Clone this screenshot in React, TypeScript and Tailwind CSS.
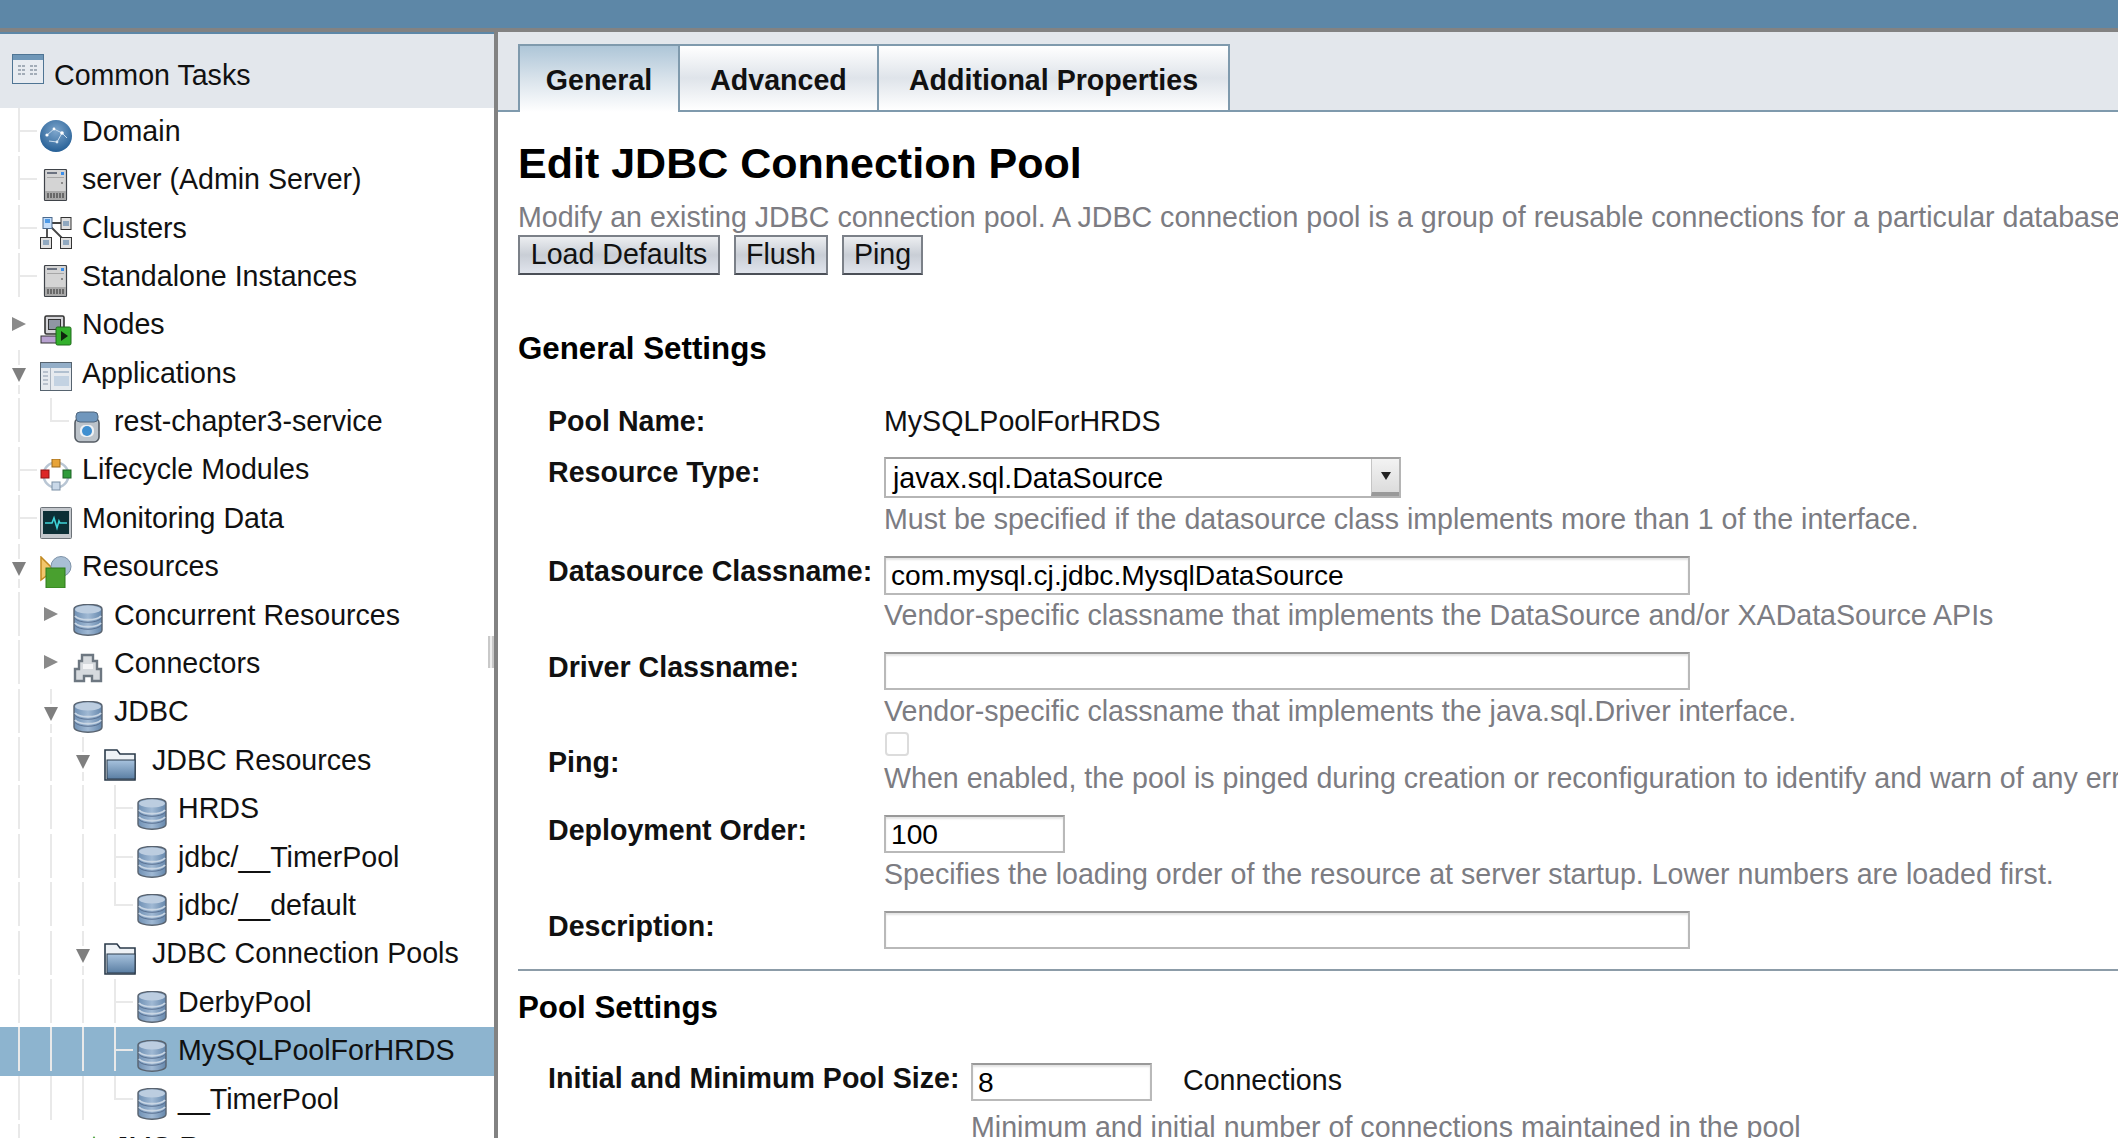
import type { ReactNode } from "react";

type Cell = "I" | "T" | "L" | "R" | "D" | "";

function Guide({ kind }: { kind: Cell }) {
	return (
		<div className="relative w-8 h-full shrink-0">
			{(kind === "I" || kind === "T" || kind === "D") && (
				<div className="absolute left-[15px] top-0 w-[2px] h-[44px] bg-[#e9e9e9]" />
			)}
			{kind === "L" && (
				<div className="absolute left-[15px] top-0 w-[2px] h-[23px] bg-[#e9e9e9]" />
			)}
			{(kind === "T" || kind === "L") && (
				<div className="absolute left-[15px] top-[22px] w-[19px] h-[2px] bg-[#e9e9e9]" />
			)}
			{kind === "R" && (
				<svg className="absolute left-[9px] top-[15px]" width="15" height="15" viewBox="0 0 15 15">
					<path d="M0 0 L14 7 L0 14 Z" fill="#8a8a8a" />
				</svg>
			)}
			{kind === "D" && (
				<div className="absolute left-[6px] top-[15px] w-5 h-[20px] bg-white">
					<svg className="absolute left-[3px] top-[3px]" width="15" height="15" viewBox="0 0 15 15">
						<path d="M0 0 L14 0 L7 14 Z" fill="#7f7f7f" />
					</svg>
				</div>
			)}
		</div>
	);
}

function DbIcon() {
	return (
		<svg width="30" height="32" viewBox="0 0 30 32">
			<defs>
				<linearGradient id="dbg" x1="0" x2="1" y1="0" y2="0">
					<stop offset="0" stopColor="#6f90b4" />
					<stop offset="0.5" stopColor="#a0b9d4" />
					<stop offset="1" stopColor="#6587ac" />
				</linearGradient>
			</defs>
			<path d="M1 5 C1 -1 29 -1 29 5 L29 26 C29 33 1 33 1 26 Z" fill="url(#dbg)" stroke="#59636f" strokeWidth="1.4" />
			<ellipse cx="15" cy="5.5" rx="13" ry="4" fill="#bccde0" />
			<path d="M2 12 C6 17 24 17 28 12 M2 19 C6 24 24 24 28 19" fill="none" stroke="#c9d6e4" strokeWidth="2" />
			<path d="M2 14.5 C6 19.5 24 19.5 28 14.5 M2 21.5 C6 26.5 24 26.5 28 21.5" fill="none" stroke="#5a7192" strokeWidth="1" />
		</svg>
	);
}

function GlobeIcon() {
	return (
		<svg width="32" height="32" viewBox="0 0 32 32">
			<defs>
				<radialGradient id="globe" cx="0.5" cy="0.35" r="0.7">
					<stop offset="0" stopColor="#7ea6cc" />
					<stop offset="1" stopColor="#1f5a92" />
				</radialGradient>
			</defs>
			<circle cx="16" cy="16" r="16" fill="url(#globe)" />
			<path d="M7 15 L14 9 L22 13 L17 22 L9 21 M22 13 L27 18" fill="none" stroke="#c9dcee" strokeWidth="1" />
			<circle cx="7" cy="15" r="1.6" fill="#fff" />
			<circle cx="14" cy="9" r="1.4" fill="#fff" />
			<circle cx="22" cy="13" r="1.8" fill="#fff" />
			<circle cx="17" cy="22" r="1.4" fill="#dce8f3" />
		</svg>
	);
}

function ServerIcon() {
	return (
		<svg width="32" height="32" viewBox="0 0 32 32">
			<rect x="4.5" y="0.5" width="22" height="31" rx="1" fill="#d4d4d4" stroke="#3f4349" strokeWidth="1.2" />
			<rect x="7" y="3" width="10" height="2" fill="#6b7280" />
			<rect x="21" y="3" width="3" height="3" fill="#3b8eea" />
			<rect x="7" y="8" width="17" height="1" fill="#a7a7a7" />
			<rect x="21" y="13" width="2" height="2" fill="#8a8a8a" />
			<rect x="5" y="22" width="21" height="9" fill="#a9a9a9" />
			<path d="M8 24 V29 M11 24 V29 M14 24 V29 M17 24 V29 M20 24 V29 M23 24 V29" stroke="#4f4f4f" strokeWidth="1.4" />
		</svg>
	);
}

function ClusterIcon() {
	return (
		<svg width="32" height="32" viewBox="0 0 32 32">
			<path d="M7 6 H25 M7 6 V22 M7 6 L25 24" stroke="#444" strokeWidth="1.8" fill="none" />
			<rect x="3" y="0.5" width="9" height="11" fill="#c5defa" stroke="#4c6a8d" />
			<rect x="5" y="2" width="5" height="4" fill="#4f9be8" />
			<rect x="21" y="0.5" width="10" height="12" fill="#e0e0e0" stroke="#333" />
			<rect x="23" y="4" width="6" height="5" fill="#90a8bf" />
			<rect x="0.5" y="20.5" width="11" height="11" fill="#e0e0e0" stroke="#333" />
			<rect x="3" y="23" width="6" height="5" fill="#90a8bf" />
			<rect x="20.5" y="20.5" width="11" height="11" fill="#e0e0e0" stroke="#333" />
			<rect x="23" y="23" width="6" height="5" fill="#90a8bf" />
		</svg>
	);
}

function NodesIcon() {
	return (
		<svg width="32" height="32" viewBox="0 0 32 32">
			<rect x="5" y="2" width="19" height="18" rx="1.5" fill="#d4d4d8" stroke="#333" strokeWidth="1.6" />
			<rect x="8.5" y="5.5" width="12" height="10" fill="#8f96a3" stroke="#333" />
			<rect x="1" y="22" width="20" height="7" fill="#b8a2d0" stroke="#333" />
			<rect x="16" y="13" width="15" height="18" rx="1.5" fill="#33b02c" stroke="#1f6b1a" />
			<path d="M21 17 L28 22 L21 27 Z" fill="#10240f" />
		</svg>
	);
}

function AppsIcon() {
	return (
		<svg width="32" height="32" viewBox="0 0 32 32">
			<rect x="0.5" y="0.5" width="31" height="28" fill="#e6eaef" stroke="#56636f" />
			<rect x="1" y="1" width="30" height="5" fill="#93aec8" />
			<path d="M10.5 6 V28" stroke="#aab4c0" />
			<path d="M3 10 H8 M3 14 H8 M3 18 H8 M3 22 H8" stroke="#a9b4c2" strokeWidth="1.5" />
			<rect x="14" y="14" width="15" height="10" fill="#c3d2e2" />
			<rect x="14" y="9" width="15" height="2" fill="#b1c0d0" />
		</svg>
	);
}

function JarIcon() {
	return (
		<svg width="32" height="32" viewBox="0 0 32 32">
			<rect x="3" y="7" width="24" height="24" rx="5" fill="#bcc3ca" stroke="#555c64" strokeWidth="1.6" />
			<rect x="4" y="1" width="22" height="10" rx="4" fill="#7097bd" stroke="#50667d" />
			<rect x="8" y="14" width="14" height="12" rx="5" fill="#eef1f4" />
			<circle cx="15" cy="20" r="5" fill="#3f8fd0" />
		</svg>
	);
}

function LifecycleIcon() {
	return (
		<svg width="32" height="32" viewBox="0 0 32 32">
			<circle cx="16" cy="16" r="12.5" fill="none" stroke="#b9c6d4" strokeWidth="2.5" />
			<rect x="12" y="0" width="8" height="8" fill="#e7a43a" stroke="#99681c" />
			<rect x="1" y="11" width="8" height="8" fill="#dd2626" stroke="#8d1515" />
			<rect x="23" y="11" width="8" height="8" fill="#2f9b3a" stroke="#1c6224" />
			<rect x="12" y="23" width="8" height="8" fill="#c9d8e8" stroke="#7a8fa5" />
		</svg>
	);
}

function MonitorIcon() {
	return (
		<svg width="32" height="32" viewBox="0 0 32 32">
			<rect x="0.5" y="0.5" width="31" height="31" rx="1" fill="#c3c7cc" stroke="#6c7278" />
			<rect x="3" y="4" width="26" height="23" fill="#0c2f36" />
			<path d="M5 16 H12 L14 11 L17 21 L19 14 L20 16 H27" fill="none" stroke="#3fd3d8" strokeWidth="1.6" />
		</svg>
	);
}

function ResourcesIcon() {
	return (
		<svg width="32" height="32" viewBox="0 0 32 32">
			<path d="M1 1 L14 14 L1 24 Z" fill="#f2c66c" stroke="#c28a21" strokeWidth="1.5" />
			<circle cx="21" cy="10.5" r="10" fill="#a9bfd4" stroke="#7d92a8" />
			<rect x="6" y="12" width="19" height="20" fill="#49a02f" stroke="#2f7a1c" />
		</svg>
	);
}

function ConnectorIcon() {
	return (
		<svg width="32" height="32" viewBox="0 0 32 32">
			<path d="M10 9 V3 H21 V9 H25 V17 H29 V29 H20 V24 H12 V29 H3 V17 H7 V9 Z" fill="#d6dade" stroke="#6d7781" strokeWidth="2.4" />
			<rect x="11" y="12" width="10" height="5" fill="#f3f4f6" />
		</svg>
	);
}

function FolderIcon() {
	return (
		<svg width="32" height="32" viewBox="0 0 32 32">
			<defs>
				<linearGradient id="fold" x1="0" x2="0" y1="0" y2="1">
					<stop offset="0" stopColor="#a8c3de" />
					<stop offset="1" stopColor="#5a7ea3" />
				</linearGradient>
			</defs>
			<path d="M1 31 V1 H13 L16 5 H31 V31 Z" fill="#eef2f6" stroke="#2a3a4a" strokeWidth="1.6" />
			<rect x="3" y="11" width="28" height="19" fill="url(#fold)" stroke="#2a3a4a" />
		</svg>
	);
}

function JmsIcon() {
	return (
		<svg width="32" height="32" viewBox="0 0 32 32">
			<path d="M22 0 L27 8 H17 Z" fill="#4aa23a" />
		</svg>
	);
}

function TasksIcon() {
	return (
		<svg width="32" height="30" viewBox="0 0 32 30">
			<rect x="0.5" y="0.5" width="31" height="29" fill="#e8ecf1" stroke="#4f7594" />
			<rect x="1" y="1" width="30" height="5" fill="#6f97b8" />
			<path d="M6 12 H14 M6 16 H14 M6 20 H14 M18 12 H26 M18 16 H26 M18 20 H26" stroke="#a3adb8" strokeWidth="2" strokeDasharray="3 1" />
		</svg>
	);
}

const treeRows: { cells: Cell[]; icon: ReactNode; label: string; gap?: string; selected?: boolean }[] = [
	{ cells: ["T"], icon: <GlobeIcon />, label: "Domain" },
	{ cells: ["T"], icon: <ServerIcon />, label: "server (Admin Server)" },
	{ cells: ["T"], icon: <ClusterIcon />, label: "Clusters" },
	{ cells: ["T"], icon: <ServerIcon />, label: "Standalone Instances" },
	{ cells: ["R"], icon: <NodesIcon />, label: "Nodes" },
	{ cells: ["D"], icon: <AppsIcon />, label: "Applications" },
	{ cells: ["I", "L"], icon: <JarIcon />, label: "rest-chapter3-service" },
	{ cells: ["T"], icon: <LifecycleIcon />, label: "Lifecycle Modules" },
	{ cells: ["T"], icon: <MonitorIcon />, label: "Monitoring Data" },
	{ cells: ["D"], icon: <ResourcesIcon />, label: "Resources" },
	{ cells: ["I", "R"], icon: <DbIcon />, label: "Concurrent Resources" },
	{ cells: ["I", "R"], icon: <ConnectorIcon />, label: "Connectors" },
	{ cells: ["I", "D"], icon: <DbIcon />, label: "JDBC" },
	{ cells: ["I", "I", "D"], icon: <FolderIcon />, label: "JDBC Resources", gap: "ml-4" },
	{ cells: ["I", "I", "I", "T"], icon: <DbIcon />, label: "HRDS" },
	{ cells: ["I", "I", "I", "T"], icon: <DbIcon />, label: "jdbc/__TimerPool" },
	{ cells: ["I", "I", "I", "L"], icon: <DbIcon />, label: "jdbc/__default" },
	{ cells: ["I", "I", "D"], icon: <FolderIcon />, label: "JDBC Connection Pools", gap: "ml-4" },
	{ cells: ["I", "I", "I", "T"], icon: <DbIcon />, label: "DerbyPool" },
	{ cells: ["I", "I", "I", "T"], icon: <DbIcon />, label: "MySQLPoolForHRDS", selected: true },
	{ cells: ["I", "I", "I", "L"], icon: <DbIcon />, label: "__TimerPool" },
	{ cells: ["I", "R"], icon: <JmsIcon />, label: "JMS Resources" },
];

function Sidebar() {
	return (
		<aside className="relative w-[498px] shrink-0 border-r-4 border-[#828282] overflow-hidden bg-white">
			<div className="h-[76px] bg-[#e3e7ec] border-t-2 border-[#5d87a7] flex items-start pl-3 pt-5">
				<TasksIcon />
				<span className="ml-[10px] mt-[3px] leading-[36px]">Common Tasks</span>
			</div>
			{treeRows.map((row) => (
				<div
					key={row.label}
					className={`flex items-center h-[48.4px] pl-[3px] ${row.selected ? "bg-[#8db4cf]" : ""}`}
				>
					{row.cells.map((cell, i) => (
						<Guide key={i} kind={cell} />
					))}
					<div className="w-8 h-8 ml-[5px] mt-2 shrink-0 flex justify-center">{row.icon}</div>
					<span className={`whitespace-nowrap -mt-[2px] ${row.gap ?? "ml-[10px]"}`}>{row.label}</span>
				</div>
			))}
			<div className="absolute left-[488px] top-[604px] w-[6px] h-8 border-x-2 border-[#c9c9c9] bg-[#eeeeee]" />
		</aside>
	);
}

function Tab({ label, active, width }: { label: string; active?: boolean; width: string }) {
	return (
		<div
			className={`${width} h-[68px] border-t-2 border-r-2 border-[#7f9aad] flex justify-center pt-[13px] font-bold ${
				active
					? "bg-gradient-to-b from-[#aec6d8] via-[#d9e3eb] to-white"
					: "bg-gradient-to-b from-white via-[#dfe4ea] to-white border-b-2"
			}`}
		>
			{label}
		</div>
	);
}

function Button({ label, width }: { label: string; width: string }) {
	return (
		<button
			className={`${width} h-10 border-2 border-[#7b8088] border-b-[#4b4f57] bg-gradient-to-b from-[#eceef1] via-[#c9ced6] to-[#e0e4ec] leading-none pb-[2px]`}
		>
			{label}
		</button>
	);
}

function Help({ children }: { children: ReactNode }) {
	return <p className="leading-[34px] text-[#7c7c82] whitespace-nowrap">{children}</p>;
}

function Field({
	label,
	className,
	labelClass,
	children,
}: {
	label: string;
	className?: string;
	labelClass?: string;
	children: ReactNode;
}) {
	return (
		<div className={`flex pl-[30px] ${className ?? ""}`}>
			<div className={`w-[336px] shrink-0 -mt-px font-bold leading-[34px] whitespace-nowrap ${labelClass ?? ""}`}>{label}</div>
			<div className="min-w-0">{children}</div>
		</div>
	);
}

const inputClass =
	"block h-[38px] border-2 border-[#b9b9b9] border-t-[#999999] bg-white pl-[5px] text-[28.2px] text-black outline-none shadow-[inset_0_2px_2px_#e4e4e4]";

export default function App() {
	return (
		<div className="w-[2118px] h-[1138px] overflow-hidden bg-white text-[28.6px] text-[#111] flex flex-col font-['Liberation_Sans',Arial,sans-serif]">
			<div className="h-7 shrink-0 bg-[#5d87a7]" />
			<div className="h-1 shrink-0 bg-[#828282]" />
			<div className="flex flex-1 min-h-0">
				<Sidebar />
				<main className="flex-1 min-w-0 overflow-hidden">
					<div className="h-[80px] bg-[#e3e7ec] border-b-2 border-[#7f9aad] pl-5 pt-3 flex">
						<div className="flex border-l-2 border-[#7f9aad]">
							<Tab label="General" active width="w-[160px]" />
							<Tab label="Advanced" width="w-[199px]" />
							<Tab label="Additional Properties" width="w-[351px]" />
						</div>
					</div>
					<div className="pl-5">
						<h1 className="mt-[26px] text-[43px] leading-[50px] font-bold text-black">Edit JDBC Connection Pool</h1>
						<p className="mt-3 leading-[34px] text-[#7c7c82] whitespace-nowrap">
							Modify an existing JDBC connection pool. A JDBC connection pool is a group of reusable connections for a particular database.
						</p>
						<div className="mt-px flex gap-[14px]">
							<Button label="Load Defaults" width="w-[202px]" />
							<Button label="Flush" width="w-[94px]" />
							<Button label="Ping" width="w-[81px]" />
						</div>
						<h2 className="mt-[54px] text-[31.3px] leading-[40px] font-bold text-black">General Settings</h2>
					</div>
					<div className="pl-5">
						<Field label="Pool Name:" className="mt-9">
							<p className="-mt-px leading-[34px]">MySQLPoolForHRDS</p>
						</Field>
						<Field label="Resource Type:" className="mt-[18px]">
							<div className="mt-px w-[517px] h-[41px] border-2 border-[#b5b5b5] border-t-[#a0a0a0] flex items-stretch">
								<span className="flex-1 pl-[7px] leading-[38px] text-black">javax.sql.DataSource</span>
								<span className="w-7 flex items-center justify-center bg-gradient-to-b from-[#f3f3f3] to-[#dcdcdc] border-l border-[#c5c5c5] border-b-4 border-b-[#9a9a9a]">
									<svg width="10" height="8" viewBox="0 0 10 8">
										<path d="M0 0 H10 L5 8 Z" fill="#222" />
									</svg>
								</span>
							</div>
							<div className="mt-1">
								<Help>Must be specified if the datasource class implements more than 1 of the interface.</Help>
							</div>
						</Field>
						<Field label="Datasource Classname:" className="mt-[19px]">
							<input readOnly defaultValue="com.mysql.cj.jdbc.MysqlDataSource" className={`${inputClass} mt-px w-[806px] h-[39px]`} />
							<div className="mt-[3px]">
								<Help>Vendor-specific classname that implements the DataSource and/or XADataSource APIs</Help>
							</div>
						</Field>
						<Field label="Driver Classname:" className="mt-[19px]">
							<input readOnly defaultValue="" className={`${inputClass} mt-px w-[806px]`} />
							<div className="mt-1">
								<Help>Vendor-specific classname that implements the java.sql.Driver interface.</Help>
							</div>
						</Field>
						<Field label="Ping:" className="mt-1" labelClass="pt-[14px]">
							<div className="ml-px w-6 h-6 rounded-[4px] border-2 border-[#dcdcdc] bg-white" />
							<div className="mt-[5px]">
								<Help>When enabled, the pool is pinged during creation or reconfiguration to identify and warn of any erroneous values for its attributes</Help>
							</div>
						</Field>
						<Field label="Deployment Order:" className="mt-[19px]">
							<input readOnly defaultValue="100" className={`${inputClass} mt-px w-[181px]`} />
							<div className="mt-1">
								<Help>Specifies the loading order of the resource at server startup. Lower numbers are loaded first.</Help>
							</div>
						</Field>
						<Field label="Description:" className="mt-[19px]">
							<input readOnly defaultValue="" className={`${inputClass} mt-px w-[806px] h-[37px]`} />
						</Field>
						<div className="mt-5 h-[2px] bg-[#8c9ca8]" />
						<h2 className="mt-[17px] text-[31.3px] leading-[40px] font-bold text-black">Pool Settings</h2>
						<div className="mt-[34px] flex pl-[30px]">
							<div className="w-[423px] shrink-0 -mt-px font-bold leading-[34px] whitespace-nowrap">Initial and Minimum Pool Size:</div>
							<div>
								<div className="-mt-[3px] flex items-center">
									<input readOnly defaultValue="8" className={`${inputClass} w-[181px] h-[37px]`} />
									<span className="ml-[31px] pb-1">Connections</span>
								</div>
								<div className="mt-1">
									<Help>Minimum and initial number of connections maintained in the pool</Help>
								</div>
							</div>
						</div>
					</div>
				</main>
			</div>
		</div>
	);
}
